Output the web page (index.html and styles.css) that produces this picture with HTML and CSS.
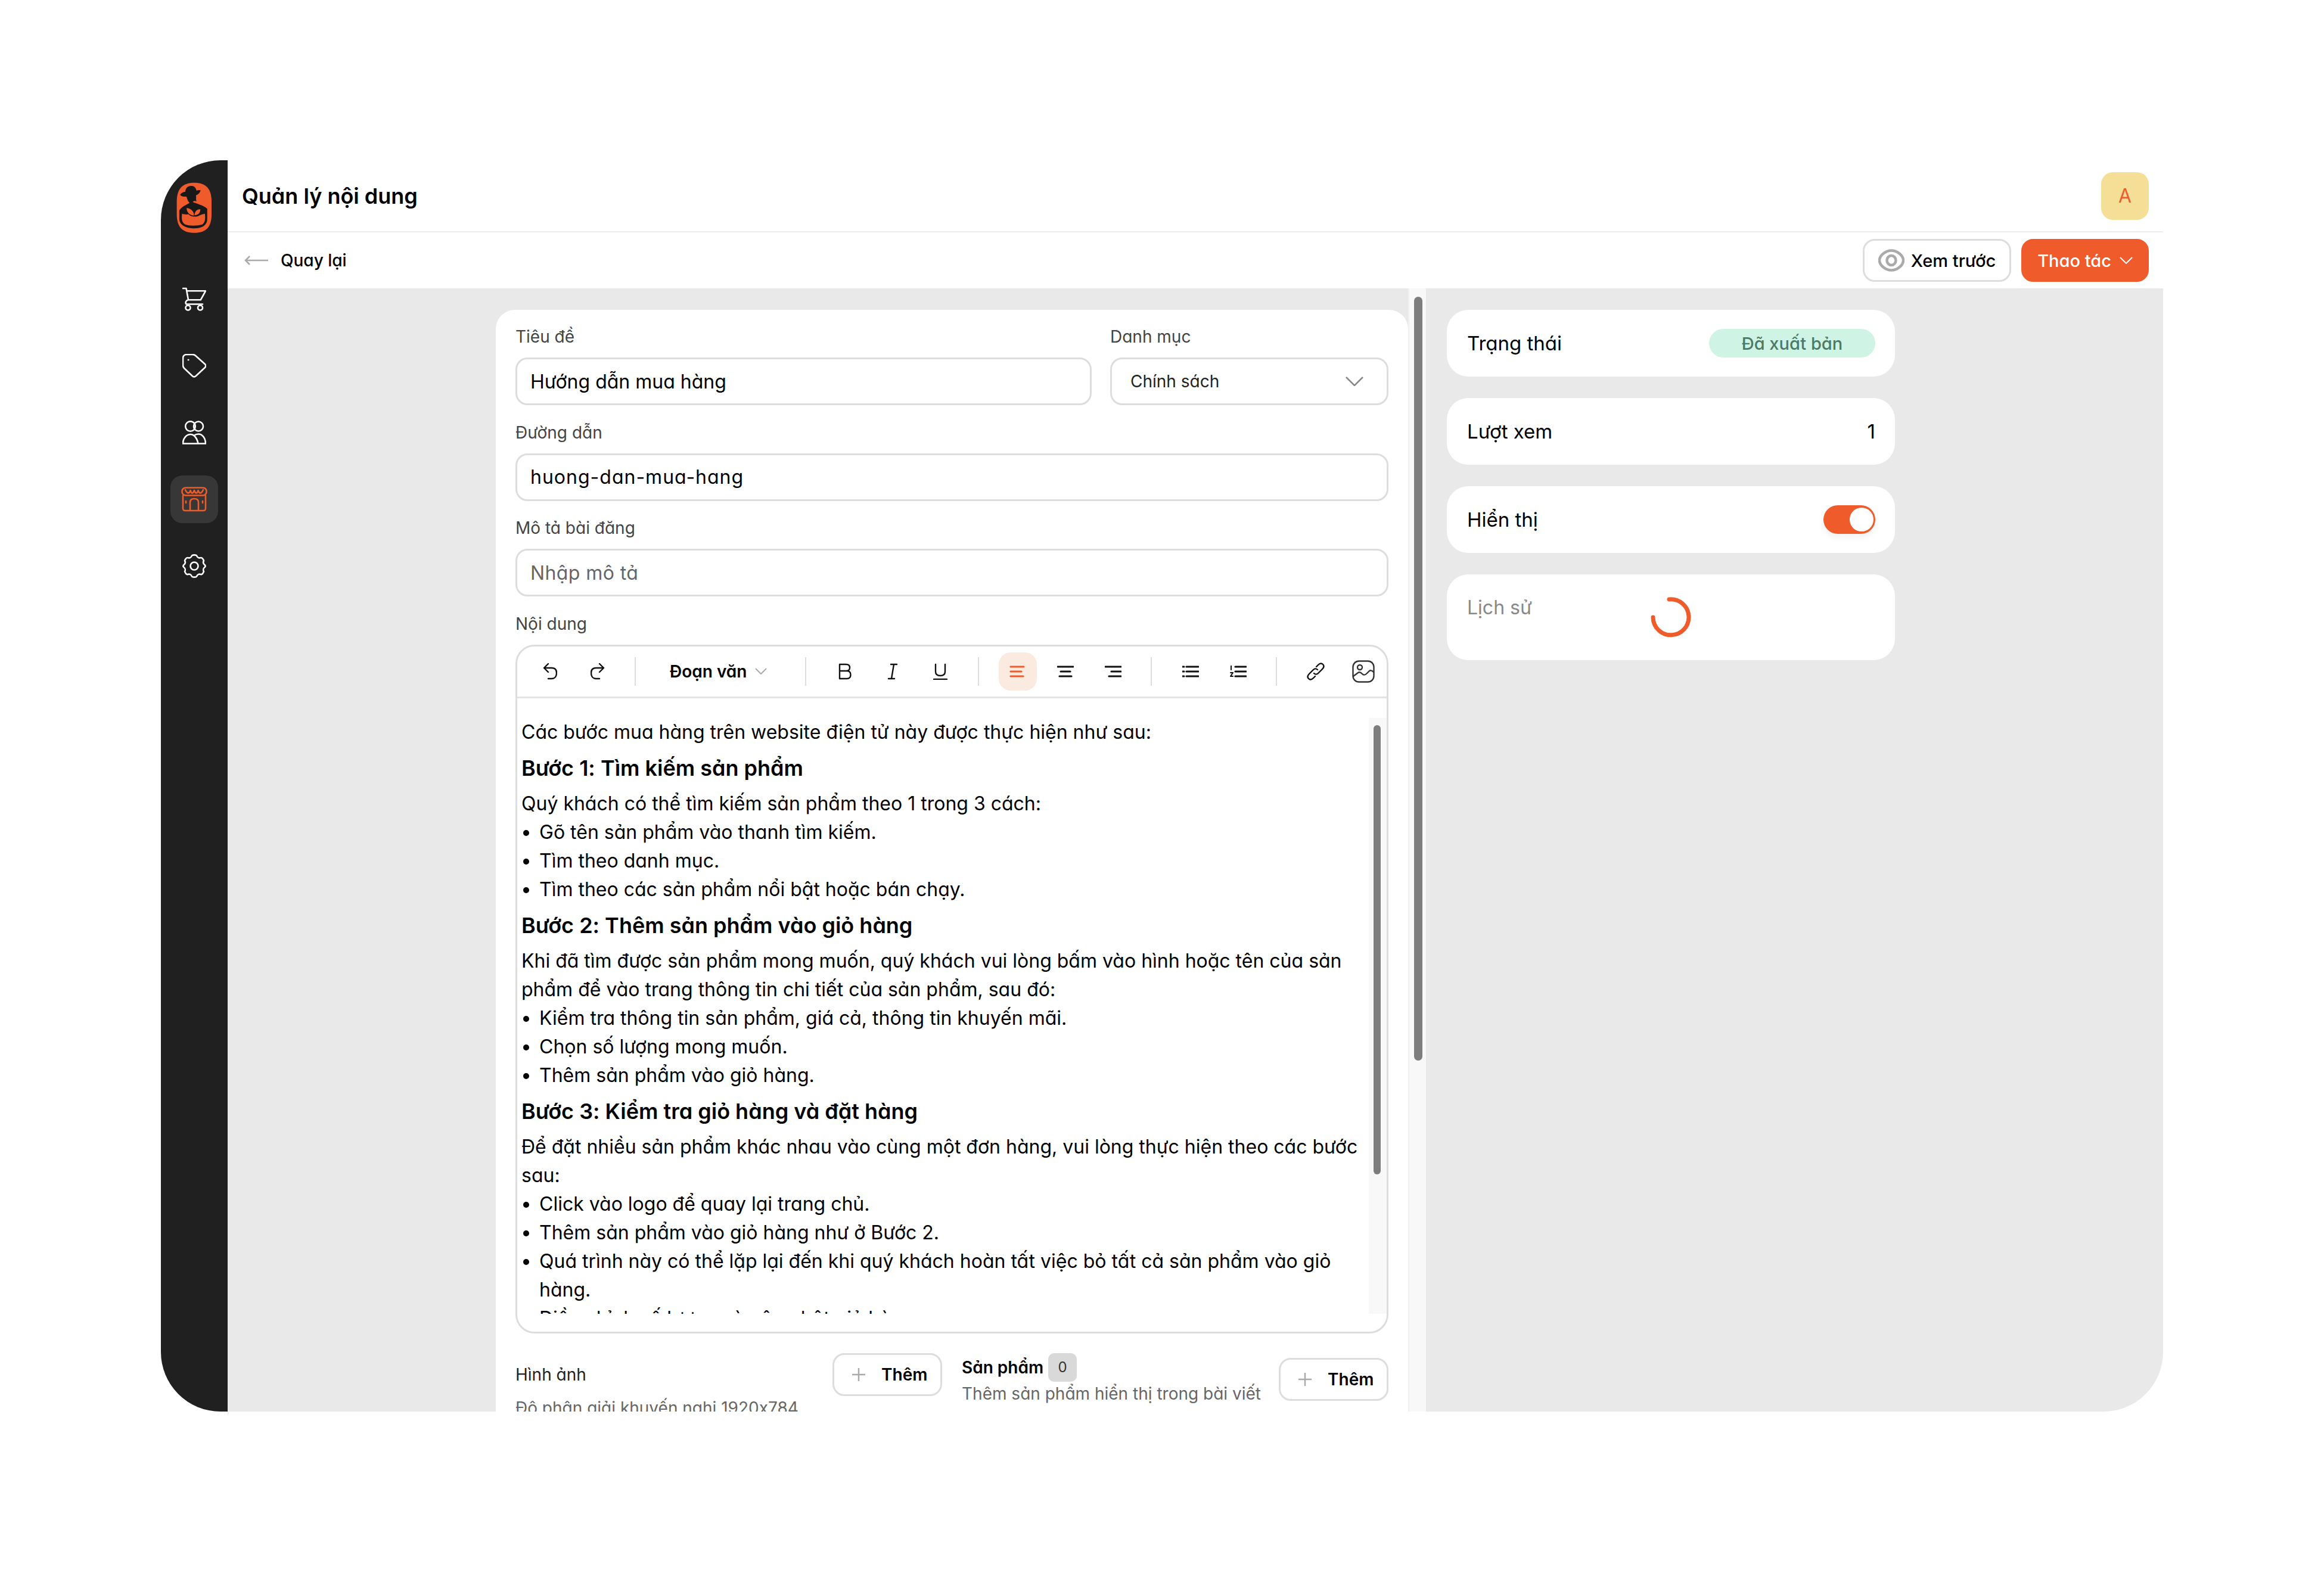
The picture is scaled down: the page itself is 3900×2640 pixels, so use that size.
FILE: index.html
```html
<!DOCTYPE html>
<html lang="vi">
<head>
  <meta charset="UTF-8" />
  <title>Quản lý nội dung</title>
  <link rel="stylesheet" href="styles.css">
</head>
<body>

  <div class="app">
    <aside class="sidebar">
      <svg class="logo" viewBox="33 28 182 260">
        <path d="M124 30C185 30 212 62 212 125V190C212 255 185 285 124 285S35 255 35 190V125C35 62 63 30 124 30Z" fill="#ef5b2b"/>
        <path d="M52 92C56 82 68 76 78 76C80 56 92 45 110 46C124 46 133 56 135 70C142 68 150 66 156 68C154 80 145 90 132 94C136 102 130 110 136 124C128 122 122 120 116 128C140 138 170 145 190 162V215C190 245 165 262 124 262S48 245 48 215V170C60 150 85 142 100 132C90 122 88 110 84 100C72 102 60 100 52 92Z" fill="#181818"/>
        <path d="M62 187C72 192 85 192 95 190C105 205 140 205 152 195C160 192 170 190 178 187C182 215 178 235 165 242C140 250 95 250 78 242C62 235 58 215 62 187Z" fill="#ef5b2b"/>
        <path d="M85 158C105 160 125 175 122 197C100 195 85 180 85 158ZM155 165C140 162 126 175 125 195C142 195 155 185 155 165Z" fill="#ef5b2b"/>
      </svg>

      <nav class="nav">
        <a class="nav-item">
          <svg viewBox="0 0 40 40" class="nav-icon"><path d="M1 2H6.500L10 21.300H30.700L39 6.300H7.300M10 21.300C6 22 4.500 26 6.500 28.500H34"/><circle cx="9.500" cy="34.500" r="4"/><circle cx="30" cy="34.500" r="4"/></svg>
        </a>
        <a class="nav-item">
          <svg viewBox="0 0 40 40" class="nav-icon"><path d="M7 1H17C19 1 21 1.800 22.500 3.200L37.800 17C39.800 18.800 39.800 21 37.800 23L23 36.800C21 38.800 18.500 38.800 16.500 36.800L3 24C1.500 22.500 1 21 1 19V7C1 3.500 3.500 1 7 1Z"/><circle cx="10" cy="10" r="1" class="dot"/></svg>
        </a>
        <a class="nav-item">
          <svg viewBox="0 0 40 40" class="nav-icon"><circle cx="13.500" cy="9.500" r="8.300"/><circle cx="27" cy="9.500" r="8"/><path d="M1 38.500H39C39 30 34 22.500 27 22.500C24 22.500 21.500 23.500 19.500 25C17.500 23.500 16 23 14 23C6.500 23 1 30 1 38.500ZM19.500 25C23 28 25.500 33 26.500 38.500"/></svg>
        </a>
        <a class="nav-item active">
          <svg viewBox="0 0 44 42" class="nav-icon wide"><rect x="1.500" y="1.500" width="41" height="13" rx="6"/><path d="M7 5C10 12 14 12 15.500 6C17 12 20 12 22 6C24 12 27 12 28.500 6C30 12 34 12 37 5"/><path d="M3 15V36C3 39 4 40 7 40H37C40 40 41 39 41 36V15M15 40V26C15 22 18 20 22 20S29 22 29 26V40M8 24V27M36 24V27"/></svg>
        </a>
        <a class="nav-item">
          <svg viewBox="0 0 40 40" class="nav-icon"><circle cx="20" cy="20" r="6.500"/><path d="M16 2.500C17 1 23 1 24 2.500C25 6 28 7 31 6C33 5.500 35.500 9 36 11C34.500 13.500 35 16 37.500 18C39 19.500 39 21 37.500 22C35 24 34.500 27 36 29C35.500 31 33 35 31 34C28 33 25 34 24 37.500C23 39 17 39 16 37.500C15 34 12 33 9 34C7 35 4.500 31 4 29C5.500 27 5 24 2.500 22C1 21 1 19.500 2.500 18C5 16 5.500 13.500 4 11C4.500 9 7 5.500 9 6C12 7 15 6 16 2.500Z"/></svg>
        </a>
      </nav>
    </aside>

    <div class="main">
      <header class="topbar">
        <h1>Quản lý nội dung</h1>
        <div class="avatar">A</div>
      </header>

      <div class="subbar">
        <div class="back">
          <svg viewBox="0 0 40 18" class="back-icon"><path d="M40 9H2M9 2L2 9L9 16"/></svg>
          <span>Quay lại</span>
        </div>
        <div class="actions">
          <button class="btn btn-head">
            <svg viewBox="0 0 44 38" class="eye"><path d="M22 2.500C32 2.500 42 11 42 19S32 35.500 22 35.500S2 27 2 19S12 2.500 22 2.500Z"/><ellipse cx="22" cy="19" rx="7.500" ry="8"/></svg>
            Xem trước
          </button>
          <button class="btn btn-head btn-primary">
            Thao tác
            <svg viewBox="0 0 22 12" class="chev"><path d="M1 1L11 11L21 1"/></svg>
          </button>
        </div>
      </div>

      <div class="content">
        <div class="center">
          <div class="center-inner">
            <section class="card">
              <div class="row">
                <div class="field grow">
                  <label>Tiêu đề</label>
                  <div class="input">Hướng dẫn mua hàng</div>
                </div>
                <div class="field select-field">
                  <label>Danh mục</label>
                  <div class="input select">
                    <span>Chính sách</span>
                    <svg viewBox="0 0 30 16" class="select-chev"><path d="M1 1L15 15L29 1"/></svg>
                  </div>
                </div>
              </div>

              <div class="field">
                <label>Đường dẫn</label>
                <div class="input slug">huong-dan-mua-hang</div>
              </div>

              <div class="field">
                <label>Mô tả bài đăng</label>
                <div class="input placeholder">Nhập mô tả</div>
              </div>

              <div class="field">
                <label>Nội dung</label>
                <div class="editor">
                  <div class="toolbar">
                    <div class="tool-group first">
                      <span class="tool"><svg viewBox="0 0 24 28" class="ti"><path d="M9 1L2 8L9 15M2 8H15C20 8 23 11 23 16.500S20 26 15 26H9"/></svg></span>
                      <span class="tool"><svg viewBox="0 0 24 28" class="ti"><path d="M15 1L22 8L15 15M22 8H9C4 8 1 11 1 16.500S4 26 9 26H15"/></svg></span>
                    </div>
                    <div class="tool-group heading-group">
                      <b>Đoạn văn</b>
                      <svg viewBox="0 0 20 11" class="para-chev"><path d="M1 1L10 10L19 1"/></svg>
                    </div>
                    <div class="tool-group marks">
                      <span class="tool"><svg viewBox="0 0 22 28" class="ti"><path d="M2 2H13C17 2 19 4 19 7.500S17 13 13 13H2ZM2 13H14C18 13 20.500 15.500 20.500 19.500S18 26 14 26H2Z"/></svg></span>
                      <span class="tool"><svg viewBox="0 0 16 28" class="ti"><path d="M5 2H15M1 26H11M10 2L6 26"/></svg></span>
                      <span class="tool"><svg viewBox="0 0 24 28" class="ti"><path d="M4 2V14C4 19 7 21 12 21S20 19 20 14V2M1 27H23"/></svg></span>
                    </div>
                    <div class="tool-group aligns">
                      <span class="tool active-tool"><svg viewBox="0 0 28 20" class="ti bars"><path d="M2 2H24M2 10H20M2 18H23"/></svg></span>
                      <span class="tool"><svg viewBox="0 0 28 20" class="ti bars"><path d="M1 2H27M6 10H22M4 18H24"/></svg></span>
                      <span class="tool"><svg viewBox="0 0 28 20" class="ti bars"><path d="M1 2H27M11 10H27M7 18H27"/></svg></span>
                    </div>
                    <div class="tool-group lists">
                      <span class="tool"><svg viewBox="0 0 28 20" class="ti bars"><path d="M7 2H27M7 10H27M7 18H27"/><path d="M0 2H3M0 10H3M0 18H3" class="thick"/></svg></span>
                      <span class="tool"><svg viewBox="0 0 28 20" class="ti bars"><path d="M9 2H27M9 10H27M9 18H27"/><path d="M2 0V7M1 12H5L1 18H5" class="thin"/></svg></span>
                    </div>
                    <div class="tool-group media">
                      <span class="tool"><svg viewBox="0 0 32 32" class="ti link"><path d="M13 19C15 21 18 21 20 19L27 12C30 9 30 6 28 4S23 2 20 5L17 8M19 13C17 11 14 11 12 13L5 20C2 23 2 26 4 28S9 30 12 27L15 24"/></svg></span>
                      <span class="tool"><svg viewBox="0 0 38 38" class="ti pic"><rect x="1.500" y="1.500" width="35" height="35" rx="10"/><circle cx="13" cy="12" r="4"/><path d="M2 27L10 21C13 19 15 21 17 23C20 26 22 25 25 22L29 18C31 16 34 18 36 20"/></svg></span>
                    </div>
                  </div>

                  <div class="editor-body">
                    <div class="doc">
                      <p>Các bước mua hàng trên website điện tử này được thực hiện như sau:</p>
                      <h3>Bước 1: Tìm kiếm sản phẩm</h3>
                      <p>Quý khách có thể tìm kiếm sản phẩm theo 1 trong 3 cách:</p>
                      <ul>
                        <li>Gõ tên sản phẩm vào thanh tìm kiếm.</li>
                        <li>Tìm theo danh mục.</li>
                        <li>Tìm theo các sản phẩm nổi bật hoặc bán chạy.</li>
                      </ul>
                      <h3>Bước 2: Thêm sản phẩm vào giỏ hàng</h3>
                      <p>Khi đã tìm được sản phẩm mong muốn, quý khách vui lòng bấm vào hình hoặc tên của sản phẩm để vào trang thông tin chi tiết của sản phẩm, sau đó:</p>
                      <ul>
                        <li>Kiểm tra thông tin sản phẩm, giá cả, thông tin khuyến mãi.</li>
                        <li>Chọn số lượng mong muốn.</li>
                        <li>Thêm sản phẩm vào giỏ hàng.</li>
                      </ul>
                      <h3>Bước 3: Kiểm tra giỏ hàng và đặt hàng</h3>
                      <p>Để đặt nhiều sản phẩm khác nhau vào cùng một đơn hàng, vui lòng thực hiện theo các bước sau:</p>
                      <ul>
                        <li>Click vào logo để quay lại trang chủ.</li>
                        <li>Thêm sản phẩm vào giỏ hàng như ở Bước 2.</li>
                        <li>Quá trình này có thể lặp lại đến khi quý khách hoàn tất việc bỏ tất cả sản phẩm vào giỏ hàng.</li>
                        <li>Điều chỉnh số lượng và cập nhật giỏ hàng.</li>
                      </ul>
                    </div>
                    <div class="doc-scroll"><div class="doc-thumb"></div></div>
                  </div>
                </div>
              </div>

              <div class="attach">
                <div class="attach-left">
                  <div class="attach-head">
                    <div class="image-label">Hình ảnh</div>
                    <button class="btn btn-add"><svg viewBox="0 0 22 22" class="plus"><path d="M11 0V22M0 11H22"/></svg>Thêm</button>
                  </div>
                  <div class="hint">Độ phân giải khuyến nghị 1920x784</div>
                </div>
                <div class="attach-right">
                  <div>
                    <div class="products"><b>Sản phẩm</b><span class="count">0</span></div>
                    <div class="hint">Thêm sản phẩm hiển thị trong bài viết</div>
                  </div>
                  <button class="btn btn-add"><svg viewBox="0 0 22 22" class="plus"><path d="M11 0V22M0 11H22"/></svg>Thêm</button>
                </div>
              </div>
            </section>
          </div>
          <div class="page-scroll"><div class="page-thumb"></div></div>
        </div>

        <aside class="side">
          <div class="panel">
            <span>Trạng thái</span>
            <span class="pill">Đã xuất bản</span>
          </div>
          <div class="panel">
            <span>Lượt xem</span>
            <span>1</span>
          </div>
          <div class="panel">
            <span>Hiển thị</span>
            <span class="toggle"><span class="knob"></span></span>
          </div>
          <div class="panel history">
            <span class="muted">Lịch sử</span>
            <svg viewBox="0 0 68 68" class="spinner"><path d="M31 4A30 30 0 1 1 4 34"/></svg>
          </div>
        </aside>
      </div>
    </div>
  </div>

</body>
</html>
```

FILE: styles.css
```css
* {
  box-sizing: border-box;
}

html, body {
  height: 100%;
}

body {
  margin: 0;
  background: #ffffff;
  color: #000000;
  font-family: 'Inter', 'Noto Sans', sans-serif;
  font-feature-settings: "cv11" 1, "calt" 0;
  font-size: 32px;
  overflow: hidden;
}

.app {
  display: flex;
  width: 3360px;
  height: 2100px;
  margin: 269px 0 0 270px;
}

/* thanh ben trai */
.sidebar {
  width: 112px;
  height: 2100px;
  background: #202020;
  border-radius: 100px 0 0 100px;
  display: flex;
  flex-direction: column;
  align-items: center;
  padding-top: 36px;
  flex-shrink: 0;
}

.logo {
  width: 60px;
  height: 88px;
}

.nav {
  display: flex;
  flex-direction: column;
  gap: 32px;
  margin-top: 69px;
}

.nav-item {
  width: 80px;
  height: 80px;
  border-radius: 20px;
  display: flex;
  align-items: center;
  justify-content: center;
}

.nav-item.active {
  background: #373737;
}

.nav-icon {
  width: 40px;
  height: 40px;
  fill: none;
  stroke: #ffffff;
  stroke-width: 2.600;
  stroke-linejoin: round;
  stroke-linecap: round;
}

.nav-icon .dot {
  stroke-width: 1;
  fill: #ffffff;
}

.active .nav-icon {
  stroke: #ef5b2b;
}

.nav-icon.wide {
  width: 44px;
  height: 42px;
}

.main {
  flex: 1;
  display: flex;
  flex-direction: column;
  min-width: 0;
}

.topbar {
  height: 121px;
  border-bottom: 2px solid #ececec;
  display: flex;
  align-items: center;
  justify-content: space-between;
  padding: 0 24px 0 24px;
  flex-shrink: 0;
}

h1 {
  margin: 0;
  font-size: 36px;
  font-weight: 600;
}

.avatar {
  width: 80px;
  height: 80px;
  background: #f5df97;
  color: #ef5b2b;
  border-radius: 20px;
  display: flex;
  align-items: center;
  justify-content: center;
  font-size: 32px;
}

.subbar {
  height: 94px;
  display: flex;
  align-items: center;
  justify-content: space-between;
  padding: 0 24px 0 28px;
  flex-shrink: 0;
}

.back {
  display: flex;
  align-items: center;
  gap: 21px;
  font-size: 28px;
  font-weight: 500;
}

.back-icon {
  width: 40px;
  height: 18px;
  fill: none;
  stroke: #aaaaaa;
  stroke-width: 2.500;
}

.actions {
  display: flex;
  gap: 17px;
}

.btn {
  height: 72px;
  background: #ffffff;
  border: 3px solid #dddddd;
  border-radius: 20px;
  font-family: inherit;
  font-feature-settings: inherit;
  font-size: 28px;
  font-weight: 500;
  color: #000000;
  display: flex;
  align-items: center;
  padding: 0 23px;
  gap: 11px;
}

.btn-head {
  font-size: 29px;
}

.btn-primary {
  background: #ef5b2b;
  border-color: #ef5b2b;
  color: #ffffff;
  padding: 0 24px;
  gap: 14px;
}

.eye {
  width: 44px;
  height: 38px;
  fill: none;
  stroke: #aaaaaa;
  stroke-width: 4.500;
}

.chev {
  width: 22px;
  height: 12px;
  fill: none;
  stroke: #ffffff;
  stroke-width: 2;
}

.content {
  flex: 1;
  display: flex;
  background: #e9e9e9;
  min-height: 0;
  border-radius: 0 0 100px 0;
  overflow: hidden;
}

.center {
  display: flex;
  width: 2011px;
  height: 100%;
  flex-shrink: 0;
}

.center-inner {
  flex: 1;
  padding: 36px 0 0 450px;
  overflow: hidden;
}

.card {
  background: #ffffff;
  border-radius: 32px 32px 0 0;
  padding: 25px 33px 0;
  height: 2000px;
}

.page-scroll {
  width: 30px;
  background: #f8f8f8;
  border-left: 2px solid #f0f0f0;
  padding: 14px 6px 0 8px;
}

.page-thumb {
  width: 14px;
  height: 1282px;
  background: #7d7d7d;
  border-radius: 7px;
}

.row {
  display: flex;
  gap: 31px;
}

.grow {
  flex: 1;
}

.select-field {
  width: 467px;
}

.field label {
  display: block;
  font-size: 28px;
  line-height: 40px;
  color: #444444;
  margin-bottom: 15px;
}

.field {
  margin-bottom: 25.5px;
}

.input {
  height: 80px;
  border: 3px solid #dddddd;
  border-radius: 20px;
  padding: 0 22px;
  display: flex;
  align-items: center;
  font-size: 32px;
}

.slug {
  letter-spacing: 1px;
}

.placeholder {
  color: #666666;
  letter-spacing: 0.4px;
}

.select {
  justify-content: space-between;
  font-size: 28px;
  padding: 0 39px 0 31px;
  color: #222222;
}

.select-chev {
  width: 30px;
  height: 16px;
  fill: none;
  stroke: #888888;
  stroke-width: 2.500;
}

.editor {
  border: 3px solid #dddddd;
  border-radius: 32px;
  height: 1156px;
  overflow: hidden;
}

.toolbar {
  height: 87px;
  border-bottom: 3px solid #e4e4e4;
  display: flex;
  align-items: center;
}

.tool-group {
  display: flex;
  align-items: center;
  height: 48px;
  border-right: 2px solid #dddddd;
  padding-left: 33px;
  gap: 16px;
}

.tool {
  display: flex;
  align-items: center;
  justify-content: center;
  width: 64px;
  height: 64px;
  border-radius: 20px;
}

.ti {
  width: 24px;
  height: 28px;
  fill: none;
  stroke: #111111;
  stroke-width: 2.400;
  stroke-linecap: round;
  stroke-linejoin: round;
}

.ti.bars {
  width: 28px;
  height: 20px;
  stroke-width: 3.200;
}

.ti .thick {
  stroke-width: 3;
}

.ti .thin {
  stroke-width: 2;
}

.active-tool {
  background: #fbeadf;
}

.active-tool .ti {
  stroke: #ef5b2b;
}

.first {
  width: 199px;
  padding-left: 23px;
}

.heading-group {
  width: 286px;
  padding-left: 57px;
  gap: 14px;
  font-size: 28px;
}

.heading-group b {
  font-weight: 600;
}

.para-chev {
  width: 20px;
  height: 11px;
  fill: none;
  stroke: #aaaaaa;
  stroke-width: 2;
}

.marks {
  width: 290px;
}

.aligns {
  width: 290px;
}

.lists {
  width: 210px;
}

.media {
  border-right: none;
}

.ti.link {
  width: 32px;
  height: 32px;
}

.ti.pic {
  width: 38px;
  height: 38px;
  stroke: #333333;
}

.editor-body {
  display: flex;
  height: 1000px;
  margin-top: 33px;
  overflow: hidden;
}

.doc {
  flex: 1;
  padding: 0 8px 0 7px;
  font-size: 32px;
  line-height: 48px;
}

.doc p {
  margin: 0;
}

.doc h3 {
  margin: 0;
  font-size: 36px;
  font-weight: 600;
  line-height: 72px;
}

.doc ul {
  margin: 0;
  padding-left: 30px;
}

.doc-scroll {
  width: 30px;
  flex-shrink: 0;
  background: #f8f8f8;
  padding: 12px 0 0 8px;
}

.doc-thumb {
  width: 12px;
  height: 754px;
  background: #7d7d7d;
  border-radius: 6px;
}

.attach {
  display: flex;
  gap: 33px;
  margin-top: 33px;
}

.attach-left {
  width: 716px;
}

.attach-head {
  display: flex;
  justify-content: space-between;
  align-items: center;
  height: 72px;
}

.image-label {
  font-size: 28px;
  color: #222222;
}

.btn-add {
  width: 184px;
  justify-content: flex-start;
  padding: 0 0 0 30px;
  font-weight: 600;
  gap: 27px;
}

.plus {
  width: 22px;
  height: 22px;
  fill: none;
  stroke: #aaaaaa;
  stroke-width: 2.500;
}

.attach-right {
  flex: 1;
  display: flex;
  justify-content: space-between;
  align-items: flex-start;
}

.attach-right .btn-add {
  margin-top: 8px;
}

.products {
  display: flex;
  align-items: center;
  gap: 8px;
  height: 48px;
  font-size: 28px;
}

.products b {
  font-weight: 600;
}

.count {
  width: 48px;
  height: 48px;
  background: #d9d9d9;
  border-radius: 10px;
  display: flex;
  align-items: center;
  justify-content: center;
  font-size: 24px;
  color: #333333;
}

.hint {
  font-size: 28px;
  color: #666666;
  line-height: 40px;
}

/* cot phai */
.side {
  flex: 1;
  padding: 36px 0 0 35px;
}

.panel {
  width: 752px;
  height: 112px;
  background: #ffffff;
  border-radius: 36px;
  display: flex;
  align-items: center;
  justify-content: space-between;
  padding: 0 33px 0 34px;
  margin-bottom: 36px;
  font-size: 33px;
}

.pill {
  width: 279px;
  height: 48px;
  background: #cff3e5;
  color: #4d7a66;
  border-radius: 24px;
  display: flex;
  align-items: center;
  justify-content: center;
  font-size: 29px;
  font-weight: 500;
}

.toggle {
  width: 87px;
  height: 48px;
  background: #ef5b2b;
  border-radius: 24px;
  display: flex;
  align-items: center;
  justify-content: flex-end;
  padding-right: 3px;
  box-shadow: 0 6px 12px rgba(0, 0, 0, 0.06);
}

.knob {
  width: 40px;
  height: 40px;
  background: #ffffff;
  border-radius: 50%;
}

.history {
  height: 144px;
  align-items: flex-start;
  justify-content: flex-start;
  padding-top: 36px;
  gap: 199px;
}

.muted {
  color: #888888;
  font-size: 32px;
}

.spinner {
  width: 68px;
  height: 68px;
  margin-top: 2px;
  fill: none;
  stroke: #ef5b2b;
  stroke-width: 7;
  stroke-linecap: round;
}
```
